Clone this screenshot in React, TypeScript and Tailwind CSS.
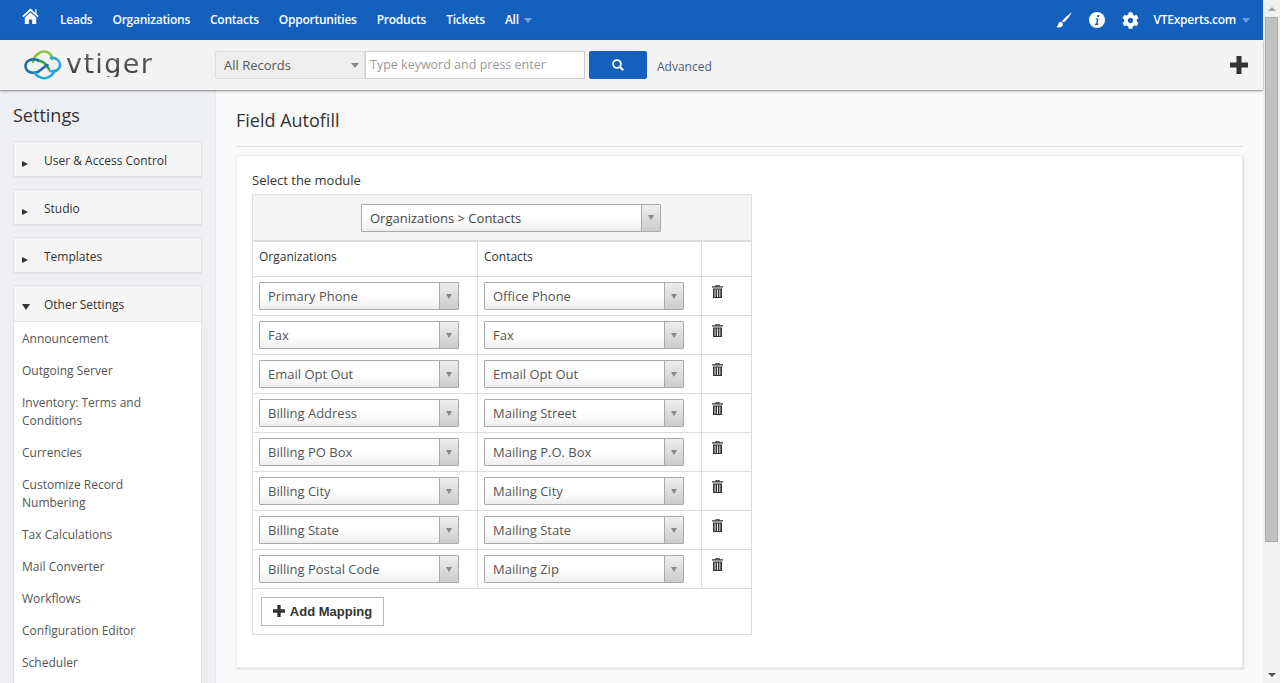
import type { FC } from "react";
import { FaCog } from "react-icons/fa";

const navItems = ["Leads", "Organizations", "Contacts", "Opportunities", "Products", "Tickets"];

const closedGroups = ["User & Access Control", "Studio", "Templates"];

const otherSettings = [
  "Announcement",
  "Outgoing Server",
  "Inventory: Terms and Conditions",
  "Currencies",
  "Customize Record Numbering",
  "Tax Calculations",
  "Mail Converter",
  "Workflows",
  "Configuration Editor",
  "Scheduler",
];

const mappings = [
  ["Primary Phone", "Office Phone"],
  ["Fax", "Fax"],
  ["Email Opt Out", "Email Opt Out"],
  ["Billing Address", "Mailing Street"],
  ["Billing PO Box", "Mailing P.O. Box"],
  ["Billing City", "Mailing City"],
  ["Billing State", "Mailing State"],
  ["Billing Postal Code", "Mailing Zip"],
];

const Caret: FC<{ className?: string }> = ({ className }) => (
  <span className={`h-0 w-0 border-x-[4px] border-t-[5px] border-x-transparent ${className ?? "border-t-[#888]"}`} />
);

const Chosen: FC<{ label: string; width: string; dark?: boolean }> = ({ label, width, dark }) => (
  <div className={`flex h-[28px] items-stretch rounded-[1px] border border-[#aaa] bg-gradient-to-b from-white from-50% to-[#eee] ${width}`}>
    <span className={`flex-1 truncate pl-2 text-[13px] leading-[26px] ${dark ? "text-[#444]" : "text-[#555]"}`}>{label}</span>
    <span className="flex w-[19px] items-center justify-center border-l border-[#aaa] bg-gradient-to-b from-[#eee] to-[#ccc]">
      <span className="h-0 w-0 border-x-[3px] border-t-[5px] border-x-transparent border-t-[#888]" />
    </span>
  </div>
);

// ─── Icons ────────────────────────────────────────────────────────────────────

const HomeIcon: FC = () => (
  <svg width="17" height="16" viewBox="0 0 17 16" fill="white">
    <path d="M8.5 0.5 0.3 8l1.2 1.3 7-6.3 7 6.3L16.7 8l-2.2-2V1h-1.2v3.9z" />
    <path d="M8.5 4.5 2.8 9.6V16h4v-4.5h3.4V16h4V9.6z" />
  </svg>
);

const BrushIcon: FC = () => (
  <svg width="16" height="16" viewBox="0 0 16 16" fill="white">
    <path d="M15.8 0.2C13 2 8.5 6 6 9l1.6 1.6C10.6 8 14.4 3.4 15.8 0.2z" />
    <path d="M5.2 9.8C3.4 9.8 2.4 11 2.2 12.6 2 13.8 1.2 14.6 0.2 15c2.4 1 5.4 0.4 6.4-1.6 0.5-1.1 0.3-2-1.4-3.6z" />
  </svg>
);

const InfoIcon: FC = () => (
  <svg width="16" height="16" viewBox="0 0 16 16">
    <circle cx="8" cy="8" r="8" fill="white" />
    <path d="M8.4 3h2l-0.4 2h-2zM6.4 6.4h3.2L8.5 11.6h1L9.3 13H5.9l0.3-1.4h0.9l0.8-3.8h-0.8z" fill="#1560bd" />
  </svg>
);

const PlusIcon: FC<{ size: number; className?: string }> = ({ size, className }) => (
  <svg width={size} height={size} viewBox="0 0 18 18" fill="currentColor" className={className}>
    <path d="M6.5 0h5v6.5H18v5h-6.5V18h-5v-6.5H0v-5h6.5z" />
  </svg>
);

const SearchIcon: FC = () => (
  <svg width="12" height="12" viewBox="0 0 12 12" fill="none" stroke="white">
    <circle cx="5" cy="5" r="3.9" strokeWidth="1.8" />
    <path d="M7.8 7.8 11.2 11.2" strokeWidth="2.2" />
  </svg>
);

const TrashIcon: FC = () => (
  <svg width="11" height="13" viewBox="0 0 11 13" fill="#333">
    <path d="M3.5 0h4v1.2H11v1.3H0V1.2h3.5zM4.5 0.8v0.4h2V0.8z" fillRule="evenodd" />
    <path d="M1 3.5h9V13H1zM2.6 4.5v7.5h0.9V4.5zM5 4.5v7.5h0.9V4.5zM7.4 4.5v7.5h0.9V4.5z" fillRule="evenodd" />
  </svg>
);

const Logo: FC = () => (
  <div className="flex items-center">
    <svg width="38" height="30" viewBox="0 0 38 30" fill="none" strokeWidth="2.6" strokeLinecap="round">
      <path d="M9 12C10 5 17 0 23 2c3 1 5 3 5 7" stroke="#8cc63f" />
      <path d="M14 11c5-1 8 3 11 8" stroke="#3f9f4f" />
      <path d="M27 8c5-1 9 3 9 7 0 5-5 7-10 6" stroke="#29a9d8" />
      <path d="M14 10C7 8 1.500 11 1.500 16c0 6 7 8 12 6 4-2 6-5 10-7" stroke="#1f6fa5" />
      <path d="M11 23c2 4 9 7 14 4 3-2 5-4 5-6" stroke="#1ea5dc" />
    </svg>
    <span className="mb-[4px] ml-[4px] bg-gradient-to-b from-[#707070] to-[#383838] bg-clip-text font-['DejaVu_Sans',sans-serif] text-[27px] leading-none tracking-[1.4px] text-transparent">
      vtiger
    </span>
  </div>
);

export default function App() {
  return (
    <div className="flex h-[683px] overflow-hidden bg-[#f9f9f9] font-['Open_Sans',sans-serif]">
      <div className="flex min-w-0 flex-1 flex-col">
        {/* Top nav */}
        <div className="flex h-[40px] shrink-0 items-center bg-[#1560bd] pl-[22px] pr-[13px] text-white">
          <span className="mb-[8px] mr-[21px]">
            <HomeIcon />
          </span>
          <div className="flex gap-[20px] text-[12px] font-semibold tracking-[-0.25px]">
            {navItems.map((item) => (
              <span key={item}>{item}</span>
            ))}
            <span className="flex items-center gap-[5px]">
              All
              <Caret className="border-t-[#6f9fdc]" />
            </span>
          </div>
          <div className="ml-auto flex items-center">
            <span className="mr-[17px]">
              <BrushIcon />
            </span>
            <span className="mr-[17px]">
              <InfoIcon />
            </span>
            <FaCog className="mr-[15px] text-[17px]" />
            <span className="text-[12px] font-semibold tracking-[-0.25px]">VTExperts.com</span>
            <Caret className="ml-[6px] border-t-[#6f9fdc]" />
          </div>
        </div>

        {/* Search header */}
        <div className="z-10 flex h-[50px] shrink-0 items-center bg-[#f3f3f3] pl-[24px] pr-[15px] shadow-[0_1px_2px_rgba(0,0,0,0.45)]">
          <div className="w-[191px]">
            <Logo />
          </div>
          <div className="flex h-[28px] w-[150px] items-center justify-between rounded-l-[2px] border border-[#ddd] bg-[#eee] pl-2 pr-[5px] pt-[1px] text-[13px] text-[#555]">
            All Records
            <Caret />
          </div>
          <div className="h-[28px] w-[220px] border border-[#ccc] bg-white pl-1 text-[12.5px] leading-[25px] text-[#999]">
            Type keyword and press enter
          </div>
          <button className="ml-[4px] flex h-[28px] w-[58px] items-center justify-center rounded-[2px] bg-[#1560bd]">
            <SearchIcon />
          </button>
          <span className="ml-[10px] mt-[4px] text-[12px] text-[#4a5e78]">Advanced</span>
          <PlusIcon size={18} className="ml-auto text-[#333]" />
        </div>

        <div className="flex min-h-0 flex-1">
          {/* Sidebar */}
          <div className="w-[216px] shrink-0 border-r border-[#e8e8ec] bg-[#eeeff3] px-[13px]">
            <div className="mt-[11px] text-[18px] leading-[28px] text-[#333]">Settings</div>
            <div className="mt-[12px] flex flex-col gap-[11px]">
              {closedGroups.map((group) => (
                <div key={group} className="flex h-[37px] items-center border border-b-2 border-[#e2e2e2] bg-[#f5f5f5] pt-[4px] text-[12px] text-[#333]">
                  <span className="ml-[8px] mr-[16px] mt-[6px] h-0 w-0 border-y-[3px] border-l-[6px] border-y-transparent border-l-[#333]" />
                  {group}
                </div>
              ))}
              <div className="border border-[#e2e2e2] bg-white">
                <div className="flex h-[36px] items-center border-b border-[#e2e2e2] bg-[#f5f5f5] pt-[2px] text-[12px] text-[#333]">
                  <span className="ml-[8px] mr-[14px] mt-[5px] h-0 w-0 border-x-[4px] border-t-[6px] border-x-transparent border-t-[#333]" />
                  Other Settings
                </div>
                <div className="pl-2 pr-[32px] pt-[8px]">
                  {otherSettings.map((item) => (
                    <div key={item} className="pb-[14px] text-[12px] leading-[18px] text-[#555]">
                      {item}
                    </div>
                  ))}
                </div>
              </div>
            </div>
          </div>

          {/* Content */}
          <div className="min-w-0 flex-1 px-[20px]">
            <div className="border-b border-[#ddd] pb-[13px] pt-[17px] text-[18px] leading-[26px] text-[#333]">Field Autofill</div>
            <div className="mt-[8px] h-[513px] border border-[#eee] bg-white pl-[15px] pt-[15px] shadow-[1px_1px_2px_rgba(0,0,0,0.12)]">
              <div className="text-[13px] leading-[18px] text-[#333]">Select the module</div>
              <div className="mt-[5px] w-[500px] border border-[#ddd]">
                <div className="flex h-[47px] items-center border-b-2 border-[#ddd] bg-[#f5f5f5] pl-[108px]">
                  <Chosen label="Organizations > Contacts" width="w-[300px]" dark />
                </div>
                <div className="grid grid-cols-[225px_224px_49px] text-[12px] text-[#333]">
                  <div className="h-[35px] border-b border-r border-[#ddd] px-[6px] leading-[30px]">Organizations</div>
                  <div className="h-[35px] border-b border-r border-[#ddd] px-[6px] leading-[30px]">Contacts</div>
                  <div className="h-[35px] border-b border-[#ddd]" />
                  {mappings.map(([from, to]) => (
                    <div key={from} className="contents">
                      <div className="h-[39px] border-b border-r border-[#ddd] px-[6px] pt-[5px]">
                        <Chosen label={from} width="w-[200px]" />
                      </div>
                      <div className="h-[39px] border-b border-r border-[#ddd] px-[6px] pt-[5px]">
                        <Chosen label={to} width="w-[200px]" />
                      </div>
                      <div className="h-[39px] border-b border-[#ddd] pl-[10px] pt-[8px]">
                        <TrashIcon />
                      </div>
                    </div>
                  ))}
                </div>
                <div className="h-[45px] pl-[8px] pt-[8px]">
                  <button className="flex h-[29px] w-[123px] items-center justify-center gap-[5px] border border-[#bbb] bg-white font-['Liberation_Sans',sans-serif] text-[13px] font-bold text-[#333]">
                    <PlusIcon size={12} className="mb-[2px]" />
                    Add Mapping
                  </button>
                </div>
              </div>
            </div>
          </div>
        </div>
      </div>

      {/* Scrollbar */}
      <div className="flex w-[17px] shrink-0 flex-col items-center bg-[#f1f1f1]">
        <div className="flex h-[17px] items-center justify-center">
          <span className="h-0 w-0 border-x-[4px] border-b-[4px] border-x-transparent border-b-[#a3a3a3]" />
        </div>
        <div className="h-[525px] w-[13px] border border-[#a8a8a8] bg-[#c1c1c1]" />
        <div className="mt-auto flex h-[17px] items-center justify-center">
          <span className="h-0 w-0 border-x-[4px] border-t-[4px] border-x-transparent border-t-[#505050]" />
        </div>
      </div>
    </div>
  );
}
